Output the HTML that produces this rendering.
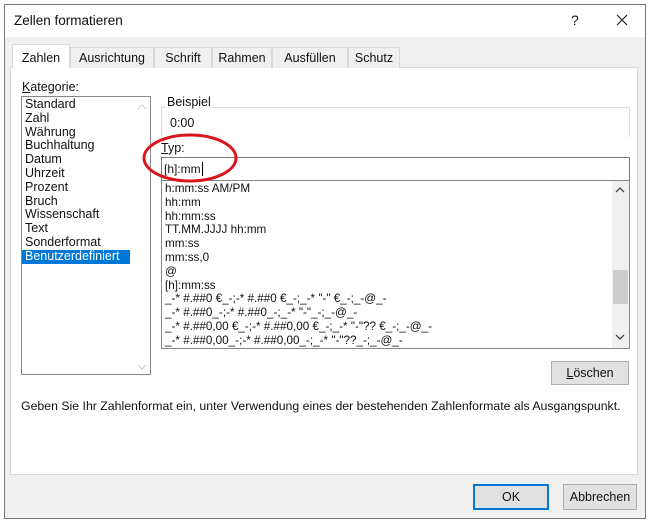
<!DOCTYPE html>
<html><head><meta charset="utf-8"><style>
*{box-sizing:border-box;margin:0;padding:0}
body{width:650px;height:523px;background:#fff;position:relative;overflow:hidden;font-family:"Liberation Sans",sans-serif;font-size:12px;color:#111}
.a{position:absolute}
.frame{left:4px;top:4px;width:642px;height:515px;border:1px solid #777;background:#f0f0f0}
.title{left:5px;top:5px;width:640px;height:32px;background:#fff}
.tab{position:absolute;top:47px;height:21px;border:1px solid #d9d9d9;border-bottom:none;background:#f0f0f0;text-align:center;line-height:20px;font-size:12.5px}
.panel{left:10px;top:67px;width:628px;height:408px;background:#fff;border:1px solid #d9d9d9}
.lst div{height:13.8px;line-height:13.8px;white-space:nowrap}
.btn{position:absolute;border:1px solid #adadad;background:#e1e1e1;text-align:center;font-size:12.5px}
</style></head><body>
<div class="a frame"></div>
<div class="a title"></div>
<div class="a" style="left:14px;top:13px;font-size:13.5px">Zellen formatieren</div>
<div class="a" style="left:571px;top:12px;font-size:14px">?</div>
<svg class="a" style="left:616px;top:14px" width="12" height="12"><path d="M1 1L11 11M11 1L1 11" stroke="#222" stroke-width="1.2"/></svg>
<div class="a panel"></div>
<div class="tab" style="left:12px;top:44px;width:58px;height:24px;background:#fff;z-index:2;line-height:26px">Zahlen</div>
<div class="tab" style="left:70px;width:84px">Ausrichtung</div>
<div class="tab" style="left:154px;width:58px">Schrift</div>
<div class="tab" style="left:212px;width:60px">Rahmen</div>
<div class="tab" style="left:272px;width:76px">Ausfüllen</div>
<div class="tab" style="left:348px;width:52px">Schutz</div>
<div class="a" style="left:22px;top:80px;font-size:12.5px"><u>K</u>ategorie:</div>
<div class="a" style="left:21px;top:96px;width:130px;height:279px;border:1px solid #828790"></div>
<div class="a lst" style="left:22px;top:97px;width:112px;padding-top:0;font-size:12.5px;top:98px">
<div style="padding-left:3px">Standard</div><div style="padding-left:3px">Zahl</div><div style="padding-left:3px">Währung</div><div style="padding-left:3px">Buchhaltung</div><div style="padding-left:3px">Datum</div><div style="padding-left:3px">Uhrzeit</div><div style="padding-left:3px">Prozent</div><div style="padding-left:3px">Bruch</div><div style="padding-left:3px">Wissenschaft</div><div style="padding-left:3px">Text</div><div style="padding-left:3px">Sonderformat</div><div style="padding-left:3px;background:#0078d7;color:#fff;width:108px">Benutzerdefiniert</div></div>
<svg class="a" style="left:137px;top:103px" width="10" height="8"><path d="M1 6L5 2L9 6" stroke="#ccc" fill="none"/></svg>
<svg class="a" style="left:137px;top:363px" width="10" height="8"><path d="M1 2L5 6L9 2" stroke="#ccc" fill="none"/></svg>
<div class="a" style="left:161px;top:107px;width:469px;height:30px;border:1px solid #ddd;border-bottom:none;border-right:1px solid #ddd"></div>
<div class="a" style="left:165px;top:95px;background:#fff;padding:0 2px;font-size:12.5px">Beispiel</div>
<div class="a" style="left:170px;top:116px;font-size:12.5px">0:00</div>
<div class="a" style="left:161px;top:141px;font-size:12.5px"><u>T</u>yp:</div>
<div class="a" style="left:161px;top:157px;width:469px;height:24px;border:1px solid #7a7a7a"></div>
<div class="a" style="left:164px;top:162px">[h]:mm<span style="border-left:1px solid #000;margin-left:1px"></span></div>
<div class="a" style="left:161px;top:180px;width:469px;height:169px;border:1px solid #828790"></div>
<div class="a lst" style="left:165px;top:182px;font-size:11.7px">
<div>h:mm:ss AM/PM</div><div>hh:mm</div><div>hh:mm:ss</div><div>TT.MM.JJJJ hh:mm</div><div>mm:ss</div><div>mm:ss,0</div><div>@</div><div>[h]:mm:ss</div><div>_-* #.##0 €_-;-* #.##0 €_-;_-* "-" €_-;_-@_-</div><div>_-* #.##0_-;-* #.##0_-;_-* "-"_-;_-@_-</div><div>_-* #.##0,00 €_-;-* #.##0,00 €_-;_-* "-"?? €_-;_-@_-</div><div>_-* #.##0,00_-;-* #.##0,00_-;_-* "-"??_-;_-@_-</div></div>
<div class="a" style="left:612px;top:181px;width:17px;height:167px;background:#f0f0f0"></div>
<div class="a" style="left:613px;top:270px;width:15px;height:34px;background:#cdcdcd"></div>
<svg class="a" style="left:615px;top:186px" width="10" height="8"><path d="M1 6L5 2L9 6" stroke="#444" fill="none" stroke-width="1.3"/></svg>
<svg class="a" style="left:615px;top:333px" width="10" height="8"><path d="M1 2L5 6L9 2" stroke="#444" fill="none" stroke-width="1.3"/></svg>
<div class="btn" style="left:551px;top:361px;width:78px;height:24px;line-height:22px"><u>L</u>öschen</div>
<div class="a" style="left:21px;top:399px;font-size:12.3px">Geben Sie Ihr Zahlenformat ein, unter Verwendung eines der bestehenden Zahlenformate als Ausgangspunkt.</div>
<div class="btn" style="left:473px;top:484px;width:76px;height:26px;border:2px solid #0078d7;line-height:22px">OK</div>
<div class="btn" style="left:563px;top:484px;width:74px;height:26px;line-height:24px">Abbrechen</div>
<svg class="a" style="left:0;top:0" width="650" height="523"><ellipse cx="190" cy="158" rx="46" ry="23" fill="none" stroke="#d9161e" stroke-width="3"/></svg>
</body></html>
